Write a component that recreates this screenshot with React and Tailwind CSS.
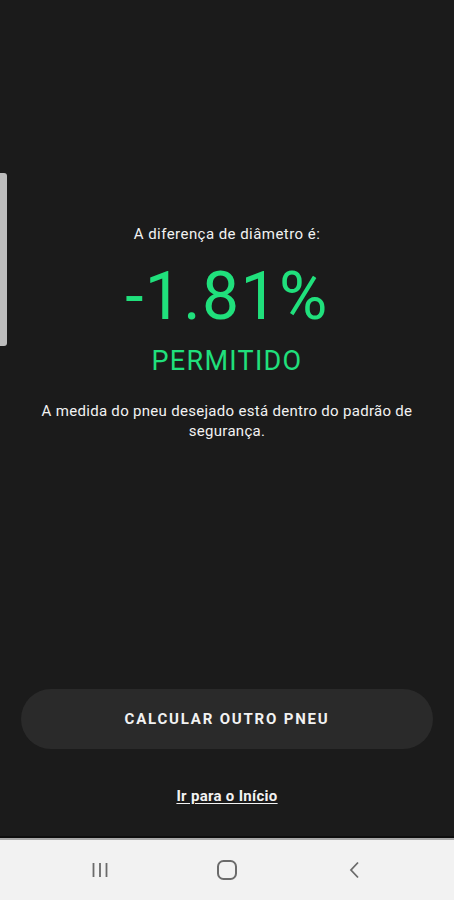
export default function App() {
  return (
    <div className="relative w-[454px] h-[900px] flex flex-col bg-[#1b1b1b]" style={{ fontFamily: "Roboto, 'Liberation Sans', sans-serif" }}>
      <div className="absolute left-0 top-[173px] w-[7px] h-[173px] bg-[#bdbdbd] rounded-r-[3px]" />
      <div className="flex-1 flex flex-col items-center">
        <div className="mt-[224px] text-[15px] leading-[20px] tracking-[0.45px] text-[#f2f2f2]">A diferença de diâmetro é:</div>
        <div className="mt-[17px] text-[66px] leading-[72px] tracking-[1.4px] text-[#20e07c]">-1.81%</div>
        <div className="mt-[12px] text-[27px] leading-[32px] tracking-[1.3px] text-[#20e07c]">PERMITIDO</div>
        <div className="mt-[24px] px-[28px] text-center text-[15px] leading-[20px] tracking-[0.3px] text-[#f2f2f2]">
          A medida do pneu desejado está dentro do padrão de segurança.
        </div>
        <button className="mt-[248px] w-[412px] h-[60px] rounded-full bg-[#2a2a2a] text-[15px] font-bold tracking-[1.8px] text-[#f2f2f2]">
          CALCULAR OUTRO PNEU
        </button>
        <div className="mt-[37px] text-[15px] leading-[20px] tracking-[0.3px] font-bold text-[#f2f2f2] underline underline-offset-2">Ir para o Início</div>
      </div>
      <div className="h-[2px] bg-[#0e0e0e]" />
      <div className="h-[62px] bg-[#f2f2f2] border-t-2 border-[#a8a8a8] flex items-center justify-center gap-[87px]">
        <div className="w-[40px] flex justify-center">
          <svg width="20" height="20" viewBox="0 0 20 20" className="text-[#6b6b6b]">
            <path d="M3.5 3v14M10 3v14M16.5 3v14" stroke="currentColor" strokeWidth="1.8" />
          </svg>
        </div>
        <div className="w-[40px] flex justify-center">
          <svg width="22" height="22" viewBox="0 0 22 22" className="text-[#6b6b6b]">
            <rect x="2" y="2" width="18" height="18" rx="5.5" fill="none" stroke="currentColor" strokeWidth="2" />
          </svg>
        </div>
        <div className="w-[40px] flex justify-center">
          <svg width="20" height="20" viewBox="0 0 20 20" className="text-[#6b6b6b]">
            <path d="M14 2.5L7 10l7 7.5" fill="none" stroke="currentColor" strokeWidth="1.8" />
          </svg>
        </div>
      </div>
    </div>
  );
}
